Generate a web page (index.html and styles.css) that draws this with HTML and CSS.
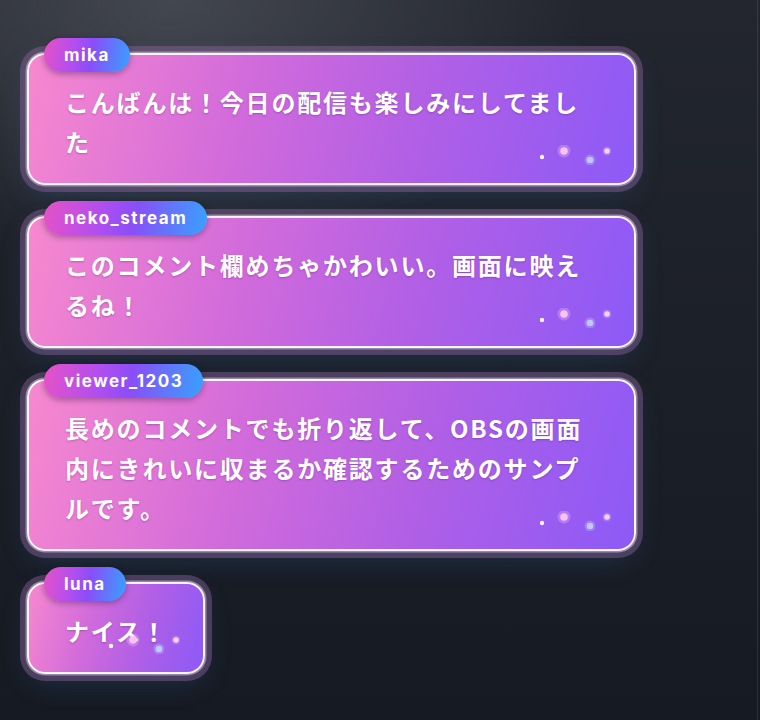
FILE: index.html
```html
<!DOCTYPE html>
<html lang="ja">
<head>
<meta charset="utf-8">
<title>Comments</title>
<link rel="stylesheet" href="styles.css">
</head>
<body>
<main class="feed">
  <div class="comment">
    <span class="tag">mika</span>
    <div class="bubble">
      <p class="msg">こんばんは！今日の配信も楽しみにしてました</p>
      <svg class="sparkles" viewBox="0 0 76 20" width="76" height="20" aria-hidden="true">
        <circle cx="29" cy="6" r="6.5" fill="#ffd0f5" opacity="0.28"/>
        <circle cx="55" cy="15" r="5.5" fill="#c8d8ff" opacity="0.28"/>
        <circle cx="72" cy="6" r="4.5" fill="#f6d0f7" opacity="0.22"/>
        <circle cx="7" cy="12" r="2.2" fill="#ffffff" opacity="0.95"/>
        <circle cx="29" cy="6" r="3.8" fill="#f9c2f2"/>
        <circle cx="55" cy="15" r="3.3" fill="#bccbff"/>
        <circle cx="72" cy="6" r="2.8" fill="#f6d0f7"/>
      </svg>
    </div>
  </div>
  <div class="comment">
    <span class="tag">neko_stream</span>
    <div class="bubble">
      <p class="msg">このコメント欄めちゃかわいい。画面に映えるね！</p>
      <svg class="sparkles" viewBox="0 0 76 20" width="76" height="20" aria-hidden="true">
        <circle cx="29" cy="6" r="6.5" fill="#ffd0f5" opacity="0.28"/>
        <circle cx="55" cy="15" r="5.5" fill="#c8d8ff" opacity="0.28"/>
        <circle cx="72" cy="6" r="4.5" fill="#f6d0f7" opacity="0.22"/>
        <circle cx="7" cy="12" r="2.2" fill="#ffffff" opacity="0.95"/>
        <circle cx="29" cy="6" r="3.8" fill="#f9c2f2"/>
        <circle cx="55" cy="15" r="3.3" fill="#bccbff"/>
        <circle cx="72" cy="6" r="2.8" fill="#f6d0f7"/>
      </svg>
    </div>
  </div>
  <div class="comment">
    <span class="tag">viewer_1203</span>
    <div class="bubble">
      <p class="msg">長めのコメントでも折り返して、OBSの画面内にきれいに収まるか確認するためのサンプルです。</p>
      <svg class="sparkles" viewBox="0 0 76 20" width="76" height="20" aria-hidden="true">
        <circle cx="29" cy="6" r="6.5" fill="#ffd0f5" opacity="0.28"/>
        <circle cx="55" cy="15" r="5.5" fill="#c8d8ff" opacity="0.28"/>
        <circle cx="72" cy="6" r="4.5" fill="#f6d0f7" opacity="0.22"/>
        <circle cx="7" cy="12" r="2.2" fill="#ffffff" opacity="0.95"/>
        <circle cx="29" cy="6" r="3.8" fill="#f9c2f2"/>
        <circle cx="55" cy="15" r="3.3" fill="#bccbff"/>
        <circle cx="72" cy="6" r="2.8" fill="#f6d0f7"/>
      </svg>
    </div>
  </div>
  <div class="comment">
    <span class="tag">luna</span>
    <div class="bubble">
      <p class="msg">ナイス！</p>
      <svg class="sparkles" viewBox="0 0 76 20" width="76" height="20" aria-hidden="true">
        <circle cx="29" cy="6" r="6.5" fill="#ffd0f5" opacity="0.28"/>
        <circle cx="55" cy="15" r="5.5" fill="#c8d8ff" opacity="0.28"/>
        <circle cx="72" cy="6" r="4.5" fill="#f6d0f7" opacity="0.22"/>
        <circle cx="7" cy="12" r="2.2" fill="#ffffff" opacity="0.95"/>
        <circle cx="29" cy="6" r="3.8" fill="#f9c2f2"/>
        <circle cx="55" cy="15" r="3.3" fill="#bccbff"/>
        <circle cx="72" cy="6" r="2.8" fill="#f6d0f7"/>
      </svg>
    </div>
  </div>
</main>
</body>
</html>
```

FILE: styles.css
```css
html, body {
  margin: 0;
  padding: 0;
  height: 100%;
}

body {
  width: 760px;
  height: 720px;
  overflow: hidden;
  background:
    linear-gradient(to left, transparent 2px, rgba(255,255,255,0.09) 2px, rgba(255,255,255,0.09) 3px, transparent 3px),
    radial-gradient(ellipse 420px 260px at 170px 0px, rgba(78, 82, 90, 0.75), rgba(78, 82, 90, 0) 100%),
    linear-gradient(180deg, #23262e 0%, #1c2028 45%, #161a22 100%);
  font-family: "Noto Sans CJK JP", "Noto Sans", sans-serif;
}

.feed {
  display: flex;
  flex-direction: column;
  align-items: flex-start;
  gap: 16px;
  padding: 38px 0 0 27px;
}

.comment {
  position: relative;
  padding-top: 15px;
  max-width: 609px;
}

.tag {
  position: absolute;
  top: 0;
  left: 17px;
  z-index: 2;
  height: 34px;
  padding: 1px 20px 0;
  box-sizing: border-box;
  display: flex;
  align-items: center;
  border-radius: 17px;
  background: linear-gradient(100deg, #e652c6 0%, #b14ef0 35%, #8a4ef8 55%, #36a2ff 100%);
  box-shadow: 0 2px 6px rgba(20, 10, 40, 0.35);
  color: #ffffff;
  font-family: "Inter", "Noto Sans", sans-serif;
  font-weight: 700;
  font-size: 17px;
  letter-spacing: 1.5px;
  line-height: 1;
}

.bubble {
  position: relative;
  box-sizing: border-box;
  max-width: 609px;
  padding: 27px 36px 21px;
  border: 2px solid rgba(255, 255, 255, 0.93);
  border-radius: 18px;
  background: linear-gradient(105deg, #f788cf 0%, #d26bdb 35%, #b05fe6 65%, #8c5af7 100%);
  box-shadow:
    0 0 0 1.5px rgba(200, 190, 215, 0.6),
    0 0 0 7px rgba(150, 105, 165, 0.4),
    0 10px 28px rgba(70, 135, 220, 0.18);
}

.msg {
  position: relative;
  z-index: 1;
  margin: 0;
  color: #ffffff;
  font-weight: 700;
  font-size: 24px;
  line-height: 40px;
  letter-spacing: 1.8px;
  text-shadow: 0 1px 2px rgba(90, 30, 120, 0.35);
}

.sparkles {
  position: absolute;
  right: 23px;
  bottom: 18px;
  z-index: 1;
}
```
